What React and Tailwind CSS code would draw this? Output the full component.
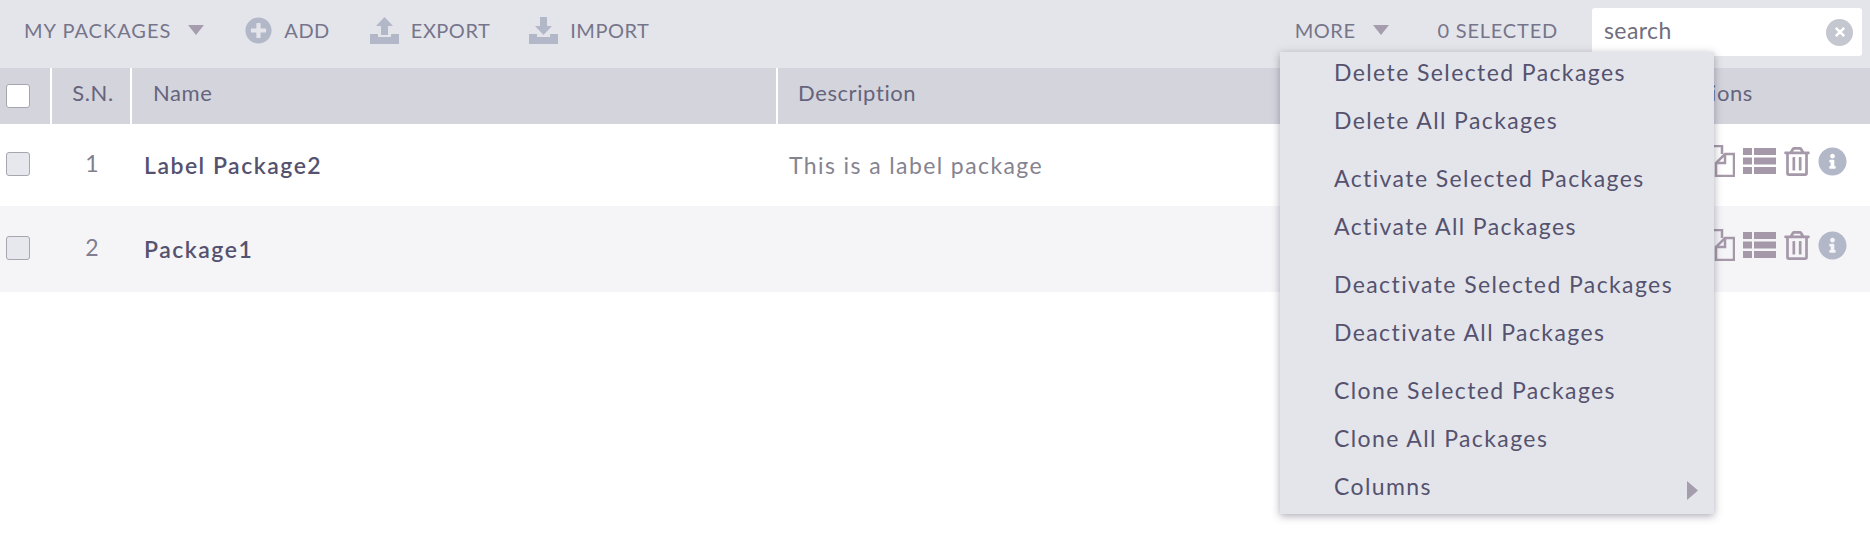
import { FaRegTrashAlt, FaInfoCircle, FaPlusCircle, FaTimes } from "react-icons/fa";

const MENU = [
  ["Delete Selected Packages", "Delete All Packages"],
  ["Activate Selected Packages", "Activate All Packages"],
  ["Deactivate Selected Packages", "Deactivate All Packages"],
  ["Clone Selected Packages", "Clone All Packages"],
];

const ROWS = [
  { sn: 1, name: "Label Package2", desc: "This is a label package", bg: "bg-white" },
  { sn: 2, name: "Package1", desc: "", bg: "bg-[#f5f5f8]" },
];

function Caret() {
  return (
    <svg width="16" height="10" viewBox="0 0 16 10" className="shrink-0">
      <path d="M0 0h16L8 10z" fill="#a59cae" />
    </svg>
  );
}

function TrayIcon({ down }) {
  return (
    <svg width="29" height="27" viewBox="0 0 29 27" className="shrink-0" fill="#b3b8c9">
      <path d="M0 17h8v3h13v-3h8v10H0z" />
      {down ? <path d="M11 0h7v9h5l-8.500 9L6 9h5z" /> : <path d="M14.500 0L23 9h-5v9h-7V9H6z" />}
    </svg>
  );
}

function CopyIcon() {
  return (
    <svg width="32" height="32" viewBox="0 0 32 32" className="shrink-0" fill="none" stroke="#a599a9" strokeWidth="2.500">
      <path d="M9 24H2V8l7-7h10v8" />
      <path d="M22 9h9v22H13V18z" />
      <path d="M22 9v9h-9" />
    </svg>
  );
}

function ListIcon() {
  return (
    <svg width="33" height="26" viewBox="0 0 33 26" className="shrink-0" fill="#a599a9">
      <path d="M0 0h9v7H0zM11 0h22v7H11zM0 9.500h9v7H0zM11 9.500h22v7H11zM0 19h9v7H0zM11 19h22v7H11z" />
    </svg>
  );
}

function Check({ className }) {
  return <div className={`h-6 w-6 rounded-[3px] border border-[#a6a6b0] ${className}`} />;
}

export default function App() {
  return (
    <div className="relative h-[548px] w-[1870px] overflow-hidden bg-white font-['Lato',sans-serif] text-[#55526f]">
      <div className="flex h-[68px] items-center bg-[#e4e5ea] pb-2 pl-6 text-[20px] tracking-[0.5px] text-[#76758a]">
        <span className="tracking-[1px]">MY PACKAGES</span>
        <span className="ml-[17px]"><Caret /></span>
        <span className="ml-[41px] flex items-center gap-[12px]">
          <FaPlusCircle className="shrink-0 text-[27px] text-[#b3b8c9]" />
          ADD
        </span>
        <span className="ml-[40px] flex items-center gap-[12px]">
          <TrayIcon />
          EXPORT
        </span>
        <span className="ml-[39px] flex items-center gap-[12px]">
          <TrayIcon down />
          IMPORT
        </span>
        <span className="ml-auto">MORE</span>
        <span className="ml-[18px]"><Caret /></span>
        <span className="ml-[48px] tracking-[0.8px]">0 SELECTED</span>
        <div className="mt-1 mr-2 ml-[34px] flex h-12 w-[270px] items-center justify-between rounded-[3px] bg-white pr-[9px] pl-3 text-[23px] tracking-[0.4px] text-[#6f6d80]">
          <span className="pb-1">search</span>
          <span className="flex h-[27px] w-[27px] items-center justify-center rounded-full bg-[#c4c6d0]">
            <FaTimes className="text-[14px] text-white" />
          </span>
        </div>
      </div>

      <div className="grid h-14 grid-cols-[52px_80px_646px_1fr_160px] items-stretch bg-[#d3d4dc] text-[22px] tracking-[0.6px] text-[#66647c]">
        <div className="flex items-center border-r-2 border-white pl-1.5">
          <Check className="bg-white" />
        </div>
        <div className="flex items-center justify-center border-r-2 border-white pb-2 pl-1">S.N.</div>
        <div className="flex items-center border-r-2 border-white pb-2 pl-[21px]">Name</div>
        <div className="flex items-center pb-2 pl-5">Description</div>
        <div className="flex items-center justify-end pr-[117px] pb-2">Actions</div>
      </div>

      {ROWS.map((r, i) => (
        <div
          key={r.sn}
          className={`grid grid-cols-[52px_80px_646px_1fr_160px] items-center ${r.bg} ${i === 0 ? "h-[82px]" : "h-[86px]"}`}
        >
          <div className="pb-[3px] pl-1.5"><Check className="bg-[#e7e8ed]" /></div>
          <div className="pb-[3px] text-center text-[23px] text-[#807e90]">{r.sn}</div>
          <div className="pl-3 text-[23px] font-semibold tracking-[1.5px] text-[#55526f]">{r.name}</div>
          <div className="pl-[11px] text-[23px] tracking-[1.4px] text-[#85838f]">{r.desc}</div>
          <div className="flex items-center justify-end gap-2 pr-[23px] pb-2 text-[#a599a9]">
            <CopyIcon />
            <ListIcon />
            <FaRegTrashAlt className="h-[29px] w-[26px] shrink-0" />
            <FaInfoCircle className="shrink-0 text-[29px] text-[#b3b8c9]" />
          </div>
        </div>
      ))}

      <div className="absolute top-[52px] left-[1280px] flex h-[462px] w-[434px] flex-col gap-[10px] bg-[#e4e5ea] shadow-[0_2px_8px_rgba(70,65,90,0.45)]">
        {MENU.map((group) => (
          <div key={group[0]}>
            {group.map((t) => (
              <div key={t} className="flex h-12 items-center pb-2 pl-[54px] text-[23px] tracking-[1.4px]">{t}</div>
            ))}
          </div>
        ))}
        <div className="-mt-[10px] flex h-12 items-center justify-between pr-4 pl-[54px] text-[23px] tracking-[1.4px]">
          <span className="pb-2">Columns</span>
          <svg width="11" height="19" viewBox="0 0 11 19">
            <path d="M0 0l11 9.500L0 19z" fill="#a59cae" />
          </svg>
        </div>
      </div>
    </div>
  );
}
